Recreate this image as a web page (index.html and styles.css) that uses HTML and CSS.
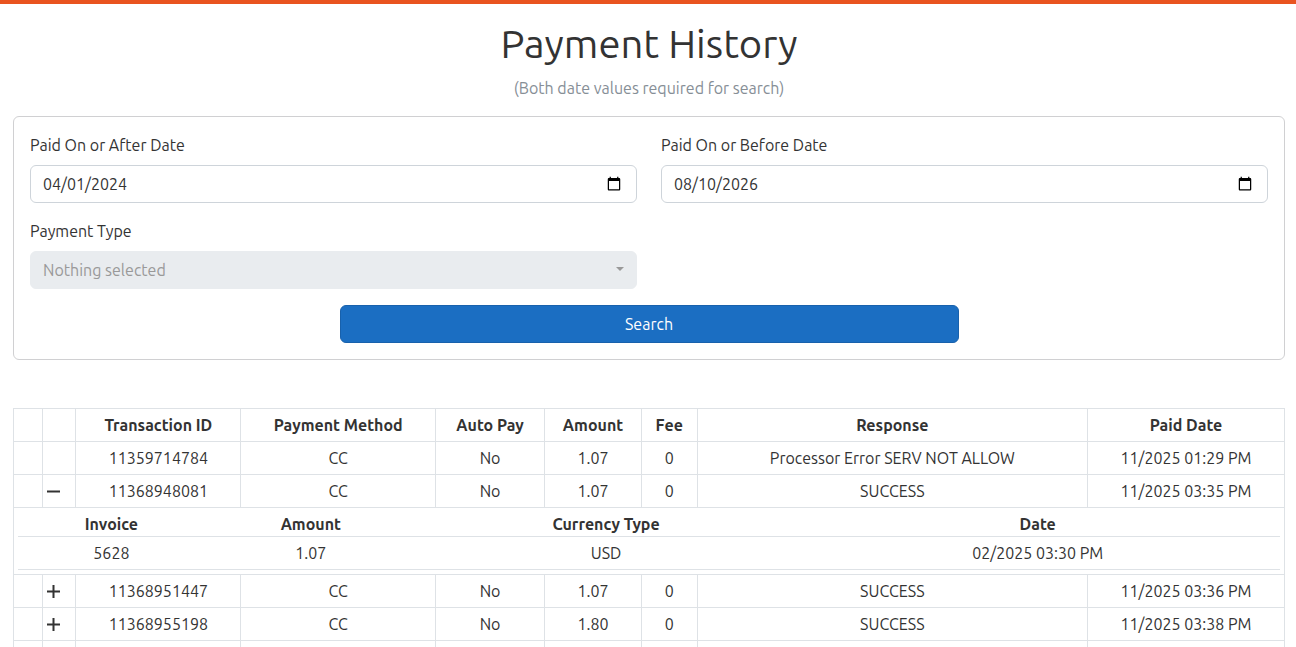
FILE: index.html
```html
<!DOCTYPE html>
<html lang="en-US">
<head>
    <meta charset="UTF-8">
    <meta name="viewport" content="width=device-width, initial-scale=1.0">
    <title>Payment History</title>
    <link rel="stylesheet" href="styles.css">
</head>
<body>
    <main class="page">
        <header class="page-header">
            <h1>Payment History</h1>
            <p>(Both date values required for search)</p>
        </header>

        <form class="search-card">
            <div class="search-fields">
                <div class="field">
                    <label for="startDate">Paid On or After Date</label>
                    <input class="form-control" type="date" id="startDate" value="2024-04-01">
                </div>
                <div class="field">
                    <label for="endDate">Paid On or Before Date</label>
                    <input class="form-control" type="date" id="endDate" value="2026-08-10">
                </div>
                <div class="field">
                    <label for="paymentType">Payment Type</label>
                    <div class="select-wrap">
                        <select class="form-control" id="paymentType" disabled>
                            <option>Nothing selected</option>
                        </select>
                    </div>
                </div>
            </div>
            <button class="btn-search" type="button">Search</button>
        </form>

        <table class="payments">
            <colgroup>
                <col class="col-spacer">
                <col class="col-toggle">
                <col class="col-id">
                <col class="col-method">
                <col class="col-autopay">
                <col class="col-amount">
                <col class="col-fee">
                <col class="col-response">
                <col class="col-date">
            </colgroup>
            <thead>
                <tr>
                    <th></th>
                    <th></th>
                    <th>Transaction ID</th>
                    <th>Payment Method</th>
                    <th>Auto Pay</th>
                    <th>Amount</th>
                    <th>Fee</th>
                    <th>Response</th>
                    <th>Paid Date</th>
                </tr>
            </thead>
            <tbody>
                <tr>
                    <td></td>
                    <td></td>
                    <td>11359714784</td>
                    <td>CC</td>
                    <td>No</td>
                    <td>1.07</td>
                    <td>0</td>
                    <td>Processor Error SERV NOT ALLOW</td>
                    <td>11/2025 01:29 PM</td>
                </tr>
                <tr>
                    <td></td>
                    <td>
                        <button class="btn-toggle" type="button" aria-label="Collapse" aria-expanded="true">
                            <svg width="13" height="13" viewBox="0 0 13 13"><path d="M0 5.5h13v2H0z"/></svg>
                        </button>
                    </td>
                    <td>11368948081</td>
                    <td>CC</td>
                    <td>No</td>
                    <td>1.07</td>
                    <td>0</td>
                    <td>SUCCESS</td>
                    <td>11/2025 03:35 PM</td>
                </tr>
                <tr>
                    <td colspan="9">
                        <table class="invoices">
                            <colgroup>
                                <col class="col-invoice">
                                <col class="col-invoice-amount">
                                <col class="col-currency">
                                <col class="col-invoice-date">
                            </colgroup>
                            <thead>
                                <tr>
                                    <th>Invoice</th>
                                    <th>Amount</th>
                                    <th>Currency Type</th>
                                    <th>Date</th>
                                </tr>
                            </thead>
                            <tbody>
                                <tr>
                                    <td>5628</td>
                                    <td>1.07</td>
                                    <td>USD</td>
                                    <td>02/2025 03:30 PM</td>
                                </tr>
                            </tbody>
                        </table>
                    </td>
                </tr>
                <tr>
                    <td></td>
                    <td>
                        <button class="btn-toggle" type="button" aria-label="Expand" aria-expanded="false">
                            <svg width="13" height="13" viewBox="0 0 13 13"><path d="M5.5 0h2v5.5H13v2H7.5V13h-2V7.5H0v-2h5.5z"/></svg>
                        </button>
                    </td>
                    <td>11368951447</td>
                    <td>CC</td>
                    <td>No</td>
                    <td>1.07</td>
                    <td>0</td>
                    <td>SUCCESS</td>
                    <td>11/2025 03:36 PM</td>
                </tr>
                <tr>
                    <td></td>
                    <td>
                        <button class="btn-toggle" type="button" aria-label="Expand" aria-expanded="false">
                            <svg width="13" height="13" viewBox="0 0 13 13"><path d="M5.5 0h2v5.5H13v2H7.5V13h-2V7.5H0v-2h5.5z"/></svg>
                        </button>
                    </td>
                    <td>11368955198</td>
                    <td>CC</td>
                    <td>No</td>
                    <td>1.80</td>
                    <td>0</td>
                    <td>SUCCESS</td>
                    <td>11/2025 03:38 PM</td>
                </tr>
                <tr>
                    <td></td>
                    <td></td>
                    <td></td>
                    <td></td>
                    <td></td>
                    <td></td>
                    <td></td>
                    <td></td>
                    <td></td>
                </tr>
            </tbody>
        </table>
    </main>
</body>
</html>
```
FILE: styles.css
```css
* {
    box-sizing: border-box;
}

body {
    margin: 0;
    border-top: 4px solid #e95420;
    background-color: #fff;
    color: #333;
    font-family: Ubuntu, "Noto Sans", sans-serif;
    font-size: 16px;
    line-height: 24px;
}

.page {
    padding: 16px 11px 0 13px;
}

.page-header {
    margin-bottom: 16px;
    text-align: center;
}

.page-header h1 {
    margin: 0 0 8px;
    font-size: 40px;
    font-weight: 400;
    line-height: 48px;
}

.page-header p {
    margin: 0;
    color: #868e96;
}

/* Search form */
.search-card {
    margin-bottom: 48px;
    padding: 16px;
    border: 1px solid #d0d0d2;
    border-radius: 6px;
}

.search-fields {
    display: grid;
    grid-template-columns: 1fr 1fr;
    gap: 16px 24px;
}

.field label {
    display: block;
    margin-bottom: 8px;
}

.form-control {
    display: block;
    width: 100%;
    height: 38px;
    padding: 6px 12px;
    border: 1px solid #ced4da;
    border-radius: 6px;
    background-color: #fff;
    color: #333;
    font: inherit;
    appearance: none;
}

.form-control::-webkit-datetime-edit-fields-wrapper,
.form-control::-webkit-datetime-edit-month-field,
.form-control::-webkit-datetime-edit-day-field,
.form-control::-webkit-datetime-edit-year-field {
    padding: 0;
}

.form-control:disabled {
    border-color: #e9ecef;
    background-color: #e9ecef;
    color: #999;
    opacity: 1;
}

.select-wrap {
    position: relative;
}

.select-wrap::after {
    content: "";
    position: absolute;
    top: 16px;
    right: 13px;
    border-top: 4px solid #999;
    border-right: 4px solid transparent;
    border-left: 4px solid transparent;
}

.btn-search {
    display: block;
    width: 50%;
    height: 38px;
    margin: 16px auto 0;
    border: 1px solid #1861ac;
    border-radius: 6px;
    background-color: #1b6ec2;
    color: #fff;
    font: inherit;
    cursor: pointer;
}

/* Payments table */
table {
    width: 100%;
    border-collapse: collapse;
    table-layout: fixed;
    text-align: center;
}

th {
    font-weight: 700;
}

.payments th,
.payments td {
    height: 33px;
    padding: 4px;
    border: 1px solid #dee2e6;
}

.col-spacer { width: 2.3%; }
.col-toggle { width: 2.6%; }
.col-id { width: 13%; }
.col-method { width: 15.3%; }
.col-autopay { width: 8.6%; }
.col-amount { width: 7.6%; }
.col-fee { width: 4.4%; }
.col-response { width: 30.7%; }
.col-date { width: 15.5%; }

.payments .invoices th,
.payments .invoices td {
    border-width: 0 0 1px;
}

.payments .invoices th {
    height: 24px;
    padding: 0;
}

.col-invoice { width: 14.8%; }
.col-invoice-amount { width: 16.8%; }
.col-currency { width: 30%; }
.col-invoice-date { width: 38.4%; }

.btn-toggle {
    display: flex;
    align-items: center;
    height: 24px;
    padding: 0;
    border: 0;
    background: none;
    color: #333;
    cursor: pointer;
}

.btn-toggle svg {
    fill: currentColor;
}
```
